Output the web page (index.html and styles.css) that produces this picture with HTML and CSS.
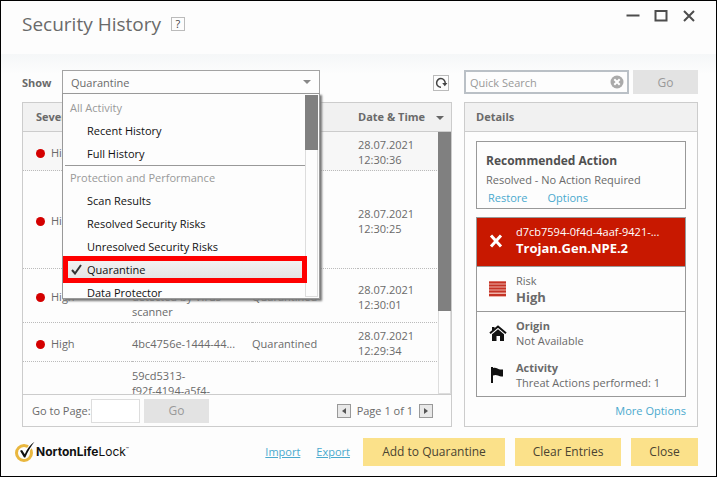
FILE: index.html
```html
<!DOCTYPE html>
<html lang="en">
<head>
  <meta charset="UTF-8" />
  <title>Security History</title>
  <link rel="stylesheet" href="styles.css">
</head>
<body>

  <header class="titlebar">
    <h1>Security History</h1>
    <button class="help" aria-label="Help">?</button>
    <div class="window-controls">
      <button aria-label="Minimize"><svg width="14" height="14" viewBox="0 0 14 14"><path d="M0.5 6.5h13" /></svg></button>
      <button aria-label="Maximize"><svg width="14" height="14" viewBox="0 0 14 14"><path d="M1.5 2h11v9.5h-11z" /></svg></button>
      <button aria-label="Close window"><svg width="14" height="14" viewBox="0 0 14 14"><path d="M2 2l10 10M12 2L2 12" /></svg></button>
    </div>
  </header>

  <main>
    <section class="history">
      <div class="toolbar">
        <label for="show">Show</label>
        <div class="dropdown">
          <select id="show">
            <option>Quarantine</option>
          </select>
          <div class="menu">
            <ul role="listbox" aria-label="Show">
              <li class="group">All Activity</li>
              <li role="option">Recent History</li>
              <li role="option">Full History</li>
              <li class="group ruled">Protection and Performance</li>
              <li role="option">Scan Results</li>
              <li role="option">Resolved Security Risks</li>
              <li role="option">Unresolved Security Risks</li>
              <li role="option" class="selected" aria-selected="true"><svg width="11" height="11" viewBox="0 0 11 11"><path d="M1 6l3 3.5L10 1" /></svg>Quarantine</li>
              <li role="option">Data Protector</li>
            </ul>
            <div class="scrollbar"><div class="thumb"></div></div>
          </div>
        </div>
        <button class="refresh" aria-label="Refresh"><svg width="14" height="14" viewBox="0 0 14 14"><path d="M7 11.2A4.3 4.3 0 1 1 11.2 7" /><path class="solid" d="M8.2 7h5.2l-2.6 3.2z" /></svg></button>
      </div>

      <div class="panel">
        <div class="table-wrap">
          <table>
            <colgroup><col class="c-sev"><col class="c-name"><col class="c-status"><col></colgroup>
            <thead>
              <tr><th>Severity</th><th></th><th></th><th>Date &amp; Time<span class="sort"></span></th></tr>
            </thead>
            <tbody>
              <tr class="row-sm current"><td><i class="dot"></i>High</td><td></td><td></td><td>28.07.2021<br>12:30:36</td></tr>
              <tr class="row-lg"><td><i class="dot"></i>High</td><td></td><td></td><td>28.07.2021<br>12:30:25</td></tr>
              <tr class="row-md"><td><i class="dot"></i>High</td><td>Threat<br>detected by Virus<br>scanner</td><td>Quarantined</td><td>28.07.2021<br>12:30:01</td></tr>
              <tr class="row-sm"><td><i class="dot"></i>High</td><td>4bc4756e-1444-44...</td><td>Quarantined</td><td>28.07.2021<br>12:29:34</td></tr>
              <tr class="last"><td></td><td>59cd5313-<br>f92f-4194-a5f4-</td><td></td><td></td></tr>
            </tbody>
          </table>
          <div class="scrollbar table-scroll"><div class="thumb"></div></div>
        </div>
        <div class="pager">
          <label for="page">Go to Page:</label>
          <input type="text" id="page">
          <button class="go">Go</button>
          <div class="pages">
            <button class="step" aria-label="Previous page"><span class="left"></span></button>
            <span>Page 1 of 1</span>
            <button class="step" aria-label="Next page"><span class="right"></span></button>
          </div>
        </div>
      </div>
    </section>

    <section class="side">
      <div class="toolbar">
        <div class="search">
          <input type="text" aria-label="Quick Search" placeholder="Quick Search">
          <button aria-label="Clear search"><svg width="14" height="14" viewBox="0 0 14 14"><circle cx="7" cy="7" r="6.5" /><path d="M4.3 4.3l5.4 5.4M9.7 4.3L4.3 9.7" /></svg></button>
        </div>
        <button class="go">Go</button>
      </div>

      <div class="panel">
        <h2>Details</h2>
        <div class="details">
          <div class="box action">
            <h3>Recommended Action</h3>
            <p>Resolved - No Action Required</p>
            <div class="links"><a href="#">Restore</a><a href="#">Options</a></div>
          </div>
          <div class="box">
            <div class="fact threat">
              <svg width="14" height="14" viewBox="0 0 14 14"><path d="M2 1.5l10 11M12 1.5l-10 11" fill="none" stroke="#fff" stroke-width="3" /></svg>
              <div><p>d7cb7594-0f4d-4aaf-9421-...</p><strong>Trojan.Gen.NPE.2</strong></div>
            </div>
            <div class="fact risk">
              <svg width="17" height="16" viewBox="0 0 17 16"><path fill="#efb3a9" d="M0 0h17v16H0z" /><path d="M0 1.5h17M0 4.5h17M0 7.5h17M0 10.5h17M0 14h17" stroke="#c43326" stroke-width="2" /></svg>
              <div><p>Risk</p><strong>High</strong></div>
            </div>
            <div class="fact">
              <svg width="18" height="16" viewBox="0 0 18 16"><path d="M1 8.3L9 1.5l8 6.8" fill="none" stroke="#111" stroke-width="2" /><path d="M3 2h2.5v3L3 7zM9 4.2l6 5V16h-4v-5H7.500v5H3V9.200z" fill="#111" /></svg>
              <div><b>Origin</b><p>Not Available</p></div>
            </div>
            <div class="fact">
              <svg width="16" height="16" viewBox="0 0 16 16"><path d="M2 0h2v16H2zM4 1c3-1 4 .5 6 1.200 2 .5 3 0 4 .3v7c-2 .3-3-.2-5-1C7 7.800 6 7.800 4 8.500z" fill="#111" /></svg>
              <div><b>Activity</b><p>Threat Actions performed: 1</p></div>
            </div>
          </div>
          <a class="more" href="#">More Options</a>
        </div>
      </div>
    </section>
  </main>

  <footer>
    <div class="logo">
      <svg width="21" height="22" viewBox="0 0 21 22"><circle cx="9" cy="12" r="7.500" fill="none" stroke="#e9b73f" stroke-width="3" /><path d="M5 9.800l2-.8 2.800 4.200C12 8 15 4 19.500.8 16 5.500 13 10 10.300 16.500H9z" fill="#111" stroke="#fff" stroke-width="2" paint-order="stroke" /></svg>
      <span><b>NortonLife</b>Lock<sup>™</sup></span>
    </div>
    <a href="#">Import</a>
    <a href="#">Export</a>
    <button class="primary add">Add to Quarantine</button>
    <button class="primary clear">Clear Entries</button>
    <button class="primary">Close</button>
  </footer>

</body>
</html>
```

FILE: styles.css
```css
* { box-sizing: border-box; }
html { height: 100%; }
body { height: 100%; margin: 0; border: 1px solid #000; background: #fdfdfd; color: #6a6a6a; font: 11px/15px "Open Sans", "Noto Sans", sans-serif; display: flex; flex-direction: column; overflow: hidden; }
h1, h2, h3, p, ul { margin: 0; padding: 0; }
button, input, select { font: inherit; color: inherit; border-radius: 0; padding: 0; }
button { border: 0; background: none; }
svg { display: block; flex: none; }
a { color: #4aa9ce; text-decoration: none; }

.titlebar { display: flex; align-items: flex-start; height: 53px; padding: 8px 20px 0 21px; flex: none; }
h1 { font-size: 19px; line-height: 30px; font-weight: normal; }
.help { width: 14px; height: 14px; margin: 8px 0 0 10px; border: 1px solid #bbb; line-height: 12px; color: #444; }
.window-controls { display: flex; gap: 14px; margin-left: auto; }
.window-controls svg { fill: none; stroke: #4d4d4d; stroke-width: 2; }

main { flex: 1; min-height: 0; display: flex; gap: 12px; padding: 16px 18px 0 21px; background: linear-gradient(#f5f7f8, #fdfdfd 20px); }
.history { flex: 1; min-width: 0; display: flex; flex-direction: column; }
.side { width: 234px; display: flex; flex-direction: column; }
.toolbar { display: flex; align-items: center; height: 24px; margin-bottom: 8px; flex: none; }
.toolbar label { width: 40px; font-weight: bold; }

/* filter drop-down, shown open */
.dropdown { position: relative; width: 258px; }
.dropdown select { display: block; appearance: none; width: 100%; height: 24px; padding: 0 8px; border: 1px solid #a3a3a3; background: #fdfdfd; }
.dropdown::after { content: ""; position: absolute; right: 9px; top: 10px; border: 4px solid transparent; border-top-color: #888; border-bottom: 0; }
.menu { position: absolute; z-index: 2; top: 23px; left: 0; width: 100%; height: 206px; border: 1px solid #999; background: #fdfdfd; box-shadow: 2px 2px 2px #777; display: flex; overflow: hidden; color: #111; }
.menu ul { flex: 1; list-style: none; padding: 2px 0 0 2px; }
.menu li { height: 23px; line-height: 23px; padding-left: 22px; white-space: nowrap; }
.menu .group { padding-left: 5px; color: #999; }
.menu .ruled { height: 24px; border-top: 1px solid #999; line-height: 24px; }
.menu .selected { position: relative; z-index: 1; display: flex; align-items: center; gap: 5px; padding-left: 6px; background: linear-gradient(#f4f4f4, #e2e2e2); outline: 5px solid #f00; outline-offset: -3px; }
.selected svg { fill: none; stroke: #333; stroke-width: 2; }
.scrollbar { width: 13px; border: 1px solid #ddd; background: #fdfdfd; }
.thumb { margin: -1px; background: #808080; }
.menu .scrollbar { margin: 1px 1px 1px 0; }
.menu .thumb { height: 55px; }

.refresh { width: 16px; height: 16px; margin: 2px 3px 0 auto; border: 1px solid #bbb; }
.refresh svg { fill: none; stroke: #444; stroke-width: 1.5; }
.refresh .solid { fill: #444; stroke: none; }
.search { flex: 1; min-width: 0; display: flex; align-items: center; height: 24px; margin-right: 4px; padding-right: 3px; border: 2px solid #bac0c6; }
.search input { flex: 1; min-width: 0; border: 0; padding: 0 4px; background: none; outline: 0; }
.search input::placeholder { color: #999; opacity: 1; }
.search svg { fill: #aaa; stroke: none; }
.search path { stroke: #fff; stroke-width: 2; }
.go { flex: none; width: 65px; height: 24px; background: #e3e3e3; color: #999; font-size: 12px; }

.panel { flex: 1; min-height: 0; display: flex; flex-direction: column; border: 1px solid #ccc; }
.panel h2, th { height: 29px; background: #f1f1f1; border-bottom: 1px solid #ccc; font-size: 11px; line-height: 28px; font-weight: bold; text-align: left; }
.panel h2 { padding-left: 11px; flex: none; }

.table-wrap { position: relative; flex: 1; min-height: 0; overflow: hidden; }
table { width: 100%; table-layout: fixed; border-collapse: separate; border-spacing: 0; }
.c-sev { width: 109px; }
.c-name { width: 120px; }
.c-status { width: 106px; }
th, td { padding: 0; white-space: nowrap; }
th:first-child, td:first-child { padding-left: 13px; }
td { border-bottom: 1px dotted #bbb; padding-top: 2px; }
.row-sm td { height: 39px; }
.row-md td { height: 54px; }
.row-lg td { height: 98px; }
.current td { background: #f7f7f7; }
.last td { padding-top: 6px; }
.dot { display: inline-block; width: 9px; height: 9px; margin-right: 6px; border-radius: 50%; background: #d40000; vertical-align: -1px; }
.sort { float: right; margin: 13px 7px 0 0; border: 4px solid transparent; border-top-color: #666; border-bottom: 0; }
.table-scroll { position: absolute; top: 29px; right: 0; bottom: 0; }
.table-scroll .thumb { height: 179px; }

.pager { display: flex; align-items: center; height: 32px; padding-left: 9px; border-top: 1px solid #ccc; flex: none; }
.pager label { width: 59px; white-space: nowrap; }
.pager input { width: 49px; height: 24px; margin-right: 4px; border: 1px solid #ddd; background: #fff; }
.pages { display: flex; align-items: center; gap: 6px; margin: 0 18px 0 auto; }
.step { width: 14px; height: 14px; display: flex; align-items: center; justify-content: center; border: 1px solid #999; background: #e8e8e8; }
.left, .right { border: 3px solid transparent; }
.left { border-right: 4px solid #555; border-left: 0; }
.right { border-left: 4px solid #555; border-right: 0; }

.details { padding: 9px 11px 0; }
.box { border: 1px solid #999; margin-bottom: 8px; }
.action { height: 68px; padding: 10px 0 0 9px; }
h3 { font-size: 12px; line-height: 18px; color: #505050; }
.action p { line-height: 20px; }
.links { display: flex; gap: 20px; padding-left: 2px; }
.fact { display: flex; align-items: center; height: 42px; padding-left: 12px; white-space: nowrap; }
.fact svg { margin-right: auto; }
.fact > div { width: 169px; }
.fact strong { display: block; font-size: 13px; line-height: 18px; }
.threat { height: 48px; padding-bottom: 3px; background: #c81800; color: #fff; }
.risk { height: 46px; border-top: 1px solid #999; border-bottom: 1px solid #999; }
.more { display: block; margin-top: -2px; text-align: right; }

footer { display: flex; align-items: center; height: 49px; padding: 0 18px 0 14px; flex: none; }
footer a { margin-right: 16px; text-decoration: underline; }
.logo { display: flex; align-items: center; margin-right: auto; color: #111; font: 12px/20px Inter, "Liberation Sans", sans-serif; }
.logo sup { font-size: 5px; line-height: 5px; }
.primary { width: 67px; height: 28px; margin-left: 10px; background: #fbe18a; color: #4a4331; font-size: 12px; }
.add { width: 142px; margin-left: -3px; }
.clear { width: 106px; }
```
